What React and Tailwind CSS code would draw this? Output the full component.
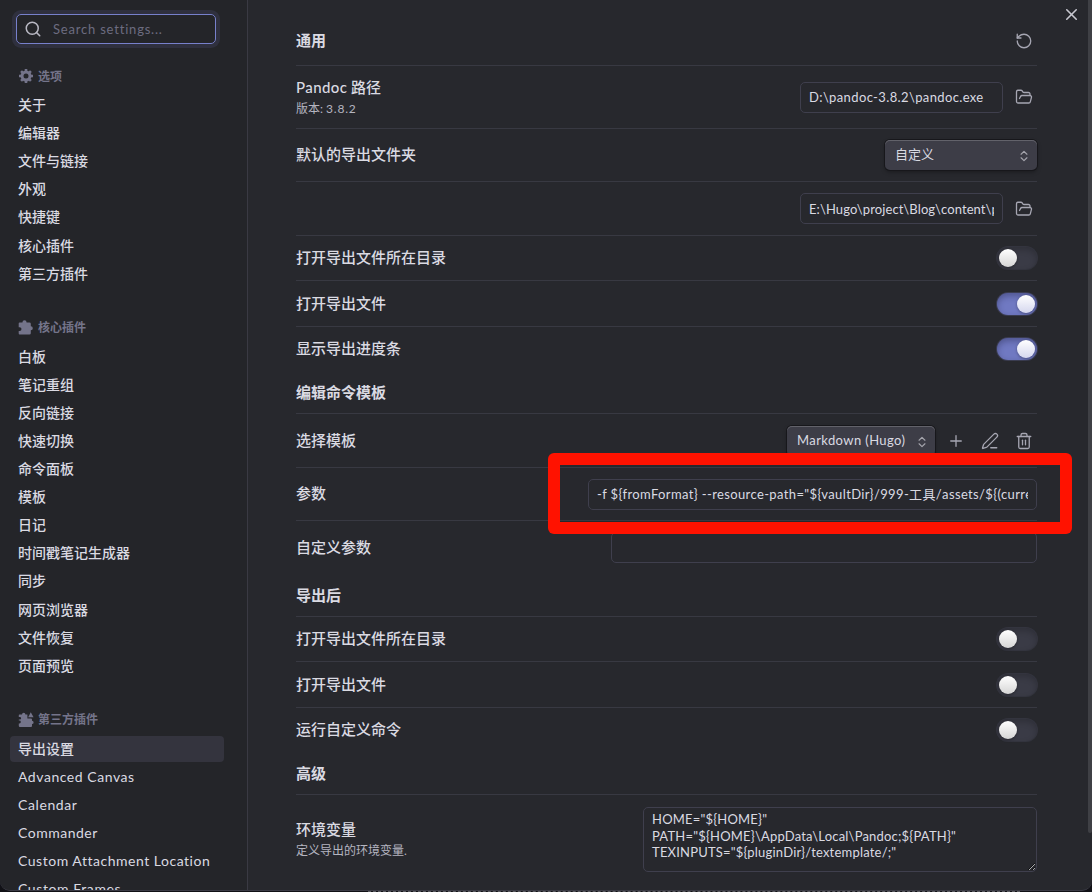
import React from "react";
import { Search, X, RotateCcw, FolderOpen, ChevronsUpDown, Plus, PenLine, Trash2 } from "lucide-react";

const options = ["关于", "编辑器", "文件与链接", "外观", "快捷键", "核心插件", "第三方插件"];
const core = ["白板", "笔记重组", "反向链接", "快速切换", "命令面板", "模板", "日记", "时间戳笔记生成器", "同步", "网页浏览器", "文件恢复", "页面预览"];
const community = [
  ["导出设置", ""],
  ["Advanced Canvas", "font-normal tracking-[0.55px]"],
  ["Calendar", "font-normal tracking-[0.6px]"],
  ["Commander", "font-normal tracking-[0.5px]"],
  ["Custom Attachment Location", "font-normal tracking-[0.52px]"],
  ["Custom Frames", "font-normal tracking-[0.6px]"],
];

function GearIcon() {
  return (
    <svg viewBox="0 0 16 16" className="size-4" fill="none" stroke="#74748a">
      <circle cx="8" cy="8" r="4" strokeWidth="3" />
      <path d="M8 1v2M8 13v2M1 8h2M13 8h2M3.05 3.05l1.4 1.4M11.55 11.55l1.4 1.4M3.05 12.95l1.4-1.4M11.55 4.45l1.4-1.4" strokeWidth="2.6" />
    </svg>
  );
}

function PuzzleIcon() {
  return (
    <svg viewBox="0 0 16 16" className="size-4" fill="#74748a">
      <path d="M1.600 2.400h2.800a2.100 2.100 0 0 1 4.200 0h2.800q1.400 0 1.400 1.400v2.400a2 2 0 0 1 0 4v3q0 1.400-1.400 1.400H1.600Q.7 14.600.7 13.600v-2.600h.9a1.900 1.900 0 0 0 0-3.800H.7V3.400Q.7 2.400 1.600 2.400Z" />
    </svg>
  );
}

function PuzzlesIcon() {
  return (
    <svg viewBox="0 0 16 16" className="size-4" fill="#74748a">
      <path d="M1.400 2.400H4a1.700 1.700 0 0 1 3.400 0h2v4.200h3.600q1 0 1 1v1.200a1.600 1.600 0 0 1 0 3.200v2q0 1-1 1H2q-1.200 0-1.200-1v-2.600h.6a1.400 1.400 0 0 0 0-2.800H.8V7.600h1a1.300 1.300 0 0 0 0-2.600h-1V3.200q0-.8.6-.8Z" />
      <path d="M12.800.2 15.600 5.300H10.200Z" />
    </svg>
  );
}

function Group({ icon, title, items, selected }) {
  return (
    <section className="flex flex-col">
      <div className="flex h-6 items-center gap-1 pl-2 text-[12px] font-bold text-[#74748a]">
        {icon}
        <span className="pt-px">{title}</span>
      </div>
      <ul className="mt-[3px] flex flex-col">
        {items.map((it, i) => {
          const [label, cls] = Array.isArray(it) ? it : [it, ""];
          return (
            <li key={label} className="flex h-[28.1px] shrink-0 items-center">
              <div className={`flex h-[26px] w-[214px] items-center rounded-[4px] pb-px pl-2 text-[14px] font-medium whitespace-nowrap ${selected === i ? "bg-[#34343e]" : ""}`}>
                <span className={cls}>{label}</span>
              </div>
            </li>
          );
        })}
      </ul>
    </section>
  );
}

function Toggle({ on }) {
  return (
    <div className={`flex h-[22px] w-10 items-center rounded-full px-0.5 ${on ? "justify-end bg-[#7079c2] shadow-[0_0_0_1px_#3a3c50,inset_0_3px_6px_rgba(20,20,50,0.35)]" : "bg-[#3a3b46] shadow-[0_0_0_1px_#33343e,inset_0_3px_6px_rgba(0,0,0,0.2)]"}`}>
      <div className={`size-[18px] rounded-full bg-linear-to-b ${on ? "from-white to-[#d5d7ee]" : "from-white to-[#d6d6d6]"} shadow-[0_1px_3px_rgba(0,0,0,0.35)]`} />
    </div>
  );
}

function Row({ h, name, desc, children, last }) {
  return (
    <div className={`flex shrink-0 items-center justify-between ${h} ${last ? "" : "border-b border-[#383942]"}`}>
      <div className={`flex flex-col ${desc ? "" : "pb-[2px]"}`}>
        <div className="text-[15px] leading-5 font-[450]">{name}</div>
        {desc && <div className="mt-[3px] text-[12px] leading-[18px] text-[#b5b5c0]">{desc}</div>}
      </div>
      <div className="flex items-center">{children}</div>
    </div>
  );
}

function Heading({ h, pad = "", children, action }) {
  return (
    <div className={`flex shrink-0 items-center justify-between border-b border-[#383942] text-[15px] font-bold ${h} ${pad}`}>
      <h2>{children}</h2>
      {action}
    </div>
  );
}

function Field({ w, children, tracking = "" }) {
  return (
    <div className={`flex h-[31px] items-center rounded-[5px] border border-[#3f3f4d] px-2 pt-[2px] text-[13px] ${w}`}>
      <div className={`w-full overflow-hidden whitespace-pre ${tracking}`}>{children}</div>
    </div>
  );
}

function Select({ w, children, tracking = "" }) {
  return (
    <div className={`flex h-[30px] items-center justify-between rounded-[5px] bg-[#3d3d47] pr-[6px] pl-2.5 text-[13px] shadow-[0_0_0_1px_#17171b,0_2px_4px_rgba(0,0,0,0.35),inset_0_1px_0_#62626a] ${w}`}>
      <span className={tracking}>{children}</span>
      <ChevronsUpDown className="mt-0.5 size-[14px] text-[#a5a5ad]" strokeWidth={2} />
    </div>
  );
}

const ic = "size-[18px] text-[#a6a6b2]";

export default function App() {
  return (
    <div className="relative h-[892px] w-[1092px] overflow-hidden bg-[#111116] font-['Lato','Noto_Sans_CJK_SC',sans-serif] text-[#dadae2]">
      <div className="flex h-[891px] overflow-hidden rounded-b-[10px] border-b border-[#3a3a44] bg-[#27282d]">
        <aside className="flex w-[248px] shrink-0 flex-col overflow-hidden border-r border-[#3a3a43] bg-[#242529] pl-2.5">
          <div className="mt-[14px] ml-1.5 flex h-[30px] w-[200px] shrink-0 items-center rounded-[5px] border border-[#7780cb] pl-[7px] shadow-[0_0_0_4px_#2f303e]">
            <Search className="size-[18px] text-[#b9b9c4]" strokeWidth={2} />
            <span className="ml-[11px] pt-[2px] text-[13px] tracking-[0.8px] text-[#6c6c80]">Search settings...</span>
          </div>
          <nav className="mt-5 flex flex-col gap-[28px]">
            <Group icon={<GearIcon />} title="选项" items={options} />
            <Group icon={<PuzzleIcon />} title="核心插件" items={core} />
            <Group icon={<PuzzlesIcon />} title="第三方插件" items={community} selected={0} />
          </nav>
        </aside>
        <main className="flex flex-1 flex-col pl-12">
          <div className="flex w-[741px] flex-col">
            <Heading h="h-[66px]" pad="pt-4" action={<RotateCcw className={`${ic} mr-1`} strokeWidth={1.75} />}>通用</Heading>
            <Row h="h-[63px]" name={<><span className="tracking-[0.4px]">Pandoc</span><span> 路径</span></>} desc={<>版本: <span className="tracking-[0.8px]">3.8.2</span></>}>
              <Field w="w-[203px]" tracking="tracking-[0.37px]">{"D:\\pandoc-3.8.2\\pandoc.exe"}</Field>
              <FolderOpen className={`${ic} mr-1 ml-3`} strokeWidth={1.75} />
            </Row>
            <Row h="h-[53px]" name="默认的导出文件夹"><Select w="w-[152px]">自定义</Select></Row>
            <Row h="h-[54px]" name="">
              <Field w="w-[203px]" tracking="tracking-[0.1px]">{"E:\\Hugo\\project\\Blog\\content\\posts"}</Field>
              <FolderOpen className={`${ic} mr-1 ml-3`} strokeWidth={1.75} />
            </Row>
            <Row h="h-[45px]" name="打开导出文件所在目录"><Toggle /></Row>
            <Row h="h-[46px]" name="打开导出文件"><Toggle on /></Row>
            <Row h="h-[44px]" name="显示导出进度条" last><Toggle on /></Row>
            <Heading h="h-[43px]">编辑命令模板</Heading>
            <Row h="h-[54px]" name="选择模板">
              <Select w="w-[148px]" tracking="tracking-[0.4px]">Markdown (Hugo)</Select>
              <Plus className={`${ic} ml-3`} strokeWidth={1.75} />
              <PenLine className={`${ic} ml-4`} strokeWidth={1.75} />
              <Trash2 className={`${ic} mr-1 ml-4`} strokeWidth={1.75} />
            </Row>
            <Row h="h-[53px]" name="参数">
              <Field w="w-[449px]" tracking="tracking-[0.37px]">{'-f ${fromFormat} --resource-path="${vaultDir}/999-工具/assets/${(currentPath)}"'}</Field>
            </Row>
            <Row h="h-[53px]" name="自定义参数" last><Field w="w-[426px]">{" "}</Field></Row>
            <Heading h="h-[43px]">导出后</Heading>
            <Row h="h-[45px]" name="打开导出文件所在目录"><Toggle /></Row>
            <Row h="h-[46px]" name="打开导出文件"><Toggle /></Row>
            <Row h="h-[44px]" name="运行自定义命令" last><Toggle /></Row>
            <Heading h="h-[43px]">高级</Heading>
            <Row h="h-[89px]" name="环境变量" desc="定义导出的环境变量." last>
              <textarea
                readOnly
                className="h-[65px] w-[394px] resize overflow-hidden rounded-[5px] border border-[#3f3f4d] bg-transparent px-2 py-[3px] text-[13px] leading-[16.5px] tracking-[0.2px] outline-none"
                value={'HOME="${HOME}"\nPATH="${HOME}\\AppData\\Local\\Pandoc;${PATH}"\nTEXINPUTS="${pluginDir}/textemplate/;"'}
              />
            </Row>
          </div>
        </main>
      </div>
      <div className="mr-[72px] ml-[368px] border-t border-dashed border-[#5a5a60]" />
      <X className="absolute top-[5px] left-[1062px] size-[19px] text-[#c8c8d0]" strokeWidth={2} />
      <div className="absolute top-0 right-0 h-[833px] w-1 rounded-b-[2px] bg-[#3f4045]" />
      <div className="absolute top-[453px] left-[548px] h-[81px] w-[524px] rounded-[6px] bg-[#ff1200] [clip-path:polygon(evenodd,0_0,100%_0,100%_100%,0_100%,0_0,12px_12px,512px_12px,512px_69px,12px_69px,12px_12px)]" />
    </div>
  );
}
